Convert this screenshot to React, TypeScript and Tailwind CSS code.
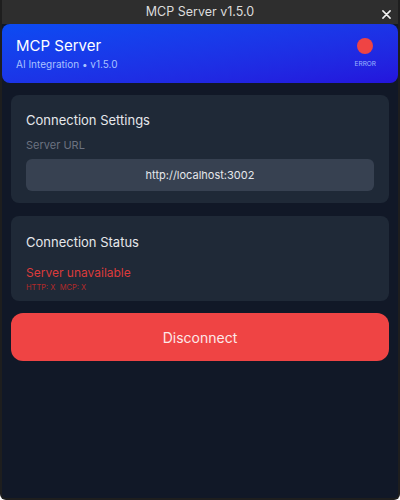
export default function App() {
	return (
		<div
			className="w-[400px] h-[500px] bg-[#1c1c1c] flex flex-col overflow-hidden rounded-b-md border-x-2 border-b-2 border-[#1e1e1e]"
			style={{ fontFamily: "Inter, 'Noto Sans', sans-serif" }}
		>
			{/* title bar */}
			<div className="h-6 shrink-0 bg-[#2e2e2e] relative flex items-center justify-center">
				<span className="text-[12.5px] text-[#dcdcdc]">MCP Server v1.5.0</span>
				<svg
					className="absolute right-[7px] top-[10px] w-[9px] h-[9px]"
					viewBox="0 0 10 10"
					fill="none"
				>
					<path d="M1 1l8 8M9 1l-8 8" stroke="#f2f2f2" strokeWidth="1.7" strokeLinecap="round" />
				</svg>
			</div>
			{/* content */}
			<div className="flex-1 bg-[#111827] flex flex-col">
				<div className="h-[59px] rounded-lg bg-gradient-to-br from-[#0b4bf2] to-[#2414dc] flex items-center justify-between pl-[14px] pr-[22px]">
					<div className="flex flex-col">
						<span className="text-[15px] leading-5 text-white">MCP Server</span>
						<span className="text-[10px] leading-4 text-[#a9c2ff]">AI Integration • v1.5.0</span>
					</div>
					<div className="self-start mt-[14px] flex flex-col items-center gap-[7px]">
						<div className="w-4 h-4 rounded-full bg-[#ef4444]" />
						<span className="text-[6.5px] leading-none text-[#9fb4ff]">ERROR</span>
					</div>
				</div>
				<div className="px-[9px] pt-3 flex flex-col gap-[13px]">
					<div className="rounded-lg bg-[#1f2937] px-[15px] pt-[15px] pb-3">
						<div className="text-[13px] leading-5 text-[#e5e7eb]">Connection Settings</div>
						<div className="mt-[7px] text-[11px] leading-4 text-[#6b7280]">Server URL</div>
						<div className="mt-[6px] h-8 rounded-md bg-[#374151] flex items-center justify-center text-[11px] text-[#e5e7eb]">
							http://localhost:3002
						</div>
					</div>
					<div className="rounded-lg bg-[#1f2937] px-[15px] pt-4 pb-[6px]">
						<div className="text-[13px] leading-5 text-[#e5e7eb]">Connection Status</div>
						<div className="mt-[13px] text-[12px] leading-4 text-[#dc3b3b]">Server unavailable</div>
						<div className="text-[7.5px] leading-[14px] text-[#b32a2a]">HTTP: X&nbsp; MCP: X</div>
					</div>
				</div>
				<div className="px-[9px] pt-3">
					<button className="w-full h-12 rounded-xl bg-[#ef4444] text-[14px] text-[#fde8e8]">
						Disconnect
					</button>
				</div>
			</div>
		</div>
	);
}
